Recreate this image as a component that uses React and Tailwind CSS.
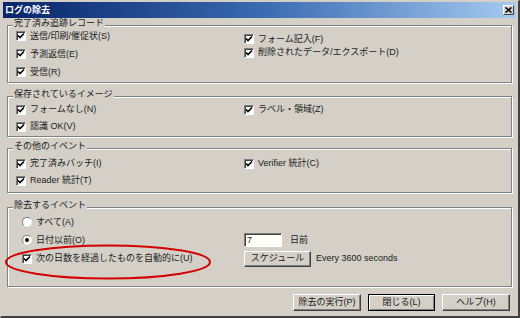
import React from "react";

const FONT = { fontFamily: '"Liberation Sans", "Noto Sans CJK JP", sans-serif' };

function Check({ checked = true }) {
  return (
    <span className="inline-flex w-[10px] h-[10px] shrink-0 items-center justify-center bg-white border border-t-[#808080] border-l-[#808080] border-b-white border-r-white shadow-[inset_1px_1px_0_#404040]">
      {checked && (
        <svg width="8" height="8" viewBox="0 0 8 8">
          <path d="M1 3.5 L3 5.5 L7 1.5" stroke="#000" strokeWidth="1.6" fill="none" />
        </svg>
      )}
    </span>
  );
}

function Radio({ checked }) {
  return (
    <span className="relative inline-flex w-[10px] h-[10px] shrink-0 items-center justify-center rounded-full bg-white border border-t-[#808080] border-l-[#808080] border-b-[#f0f0f0] border-r-[#f0f0f0]">
      {checked && <span className="w-[4px] h-[4px] rounded-full bg-black" />}
    </span>
  );
}

function CheckItem({ label, className = "" }) {
  return (
    <div className={"flex items-center gap-[4px] " + className}>
      <Check />
      <span className="leading-none whitespace-nowrap">{label}</span>
    </div>
  );
}

function Group({ title, className = "", children }) {
  return (
    <div
      className={
        "relative border border-[#808080] shadow-[inset_1px_1px_0_#ffffff,1px_1px_0_#ffffff] " +
        className
      }
    >
      <span className="absolute -top-[7px] left-[5px] bg-[#d4d0c8] px-[1px] leading-none text-[9px] whitespace-nowrap">
        {title}
      </span>
      {children}
    </div>
  );
}

function Btn({ children, isDefault = false, className = "" }) {
  return (
    <div
      className={
        "flex items-center justify-center bg-[#d4d0c8] leading-none whitespace-nowrap " +
        (isDefault
          ? "border border-black shadow-[inset_1px_1px_0_#ffffff,inset_-1px_-1px_0_#808080] "
          : "border border-t-white border-l-white border-b-[#404040] border-r-[#404040] shadow-[inset_-1px_-1px_0_#808080] ") +
        className
      }
    >
      {children}
    </div>
  );
}

export default function App() {
  return (
    <div
      className="relative w-[520px] h-[318px] bg-[#d4d0c8] text-[#1a1a1a] text-[9px] flex flex-col border-t border-l border-t-[#d4d0c8] border-l-[#d4d0c8] border-r-2 border-b-2 border-r-[#404040] border-b-[#404040] overflow-hidden"
      style={FONT}
    >
      {/* Title bar */}
      <div className="h-[16px] mx-[2px] mt-[1px] flex items-center justify-between bg-gradient-to-r from-[#0a246a] via-[#3a6ab0] to-[#a6caf0] pl-[2px] pr-[2px]">
        <span className="text-white font-bold leading-none text-[9px]">ログの除去</span>
        <div className="w-[11px] h-[10px] flex items-center justify-center bg-[#d4d0c8] border border-t-white border-l-white border-b-[#404040] border-r-[#404040]">
          <svg width="7" height="6" viewBox="0 0 7 6">
            <path d="M0.5 0.5 L6.5 5.5 M6.5 0.5 L0.5 5.5" stroke="#000" strokeWidth="1.5" />
          </svg>
        </div>
      </div>

      <div className="flex flex-col pl-[6px] pr-[6px]">
        {/* Group 1 */}
        <Group title="完了済み追跡レコード" className="mt-[7px] h-[58px] grid grid-cols-[236px_1fr]">
          <div className="flex flex-col pl-[8px] pt-[1px]">
            <CheckItem label="送信/印刷/催促状(S)" className="h-[18px]" />
            <CheckItem label="予測返信(E)" className="h-[18px]" />
            <CheckItem label="受信(R)" className="h-[18px]" />
          </div>
          <div className="flex flex-col pt-[6px]">
            <CheckItem label="フォーム記入(F)" className="h-[14px]" />
            <CheckItem label="削除されたデータ/エクスポート(D)" className="h-[13px]" />
          </div>
        </Group>

        {/* Group 2 */}
        <Group title="保存されているイメージ" className="mt-[13px] h-[41px] grid grid-cols-[236px_1fr]">
          <div className="flex flex-col pl-[8px] pt-[4px]">
            <CheckItem label="フォームなし(N)" className="h-[17px]" />
            <CheckItem label="認識 OK(V)" className="h-[17px]" />
          </div>
          <div className="flex flex-col pt-[4px]">
            <CheckItem label="ラベル・領域(Z)" className="h-[17px]" />
          </div>
        </Group>

        {/* Group 3 */}
        <Group title="その他のイベント" className="mt-[11px] h-[45px] grid grid-cols-[236px_1fr]">
          <div className="flex flex-col pl-[8px] pt-[6px]">
            <CheckItem label="完了済みバッチ(I)" className="h-[17px]" />
            <CheckItem label="Reader 統計(T)" className="h-[17px]" />
          </div>
          <div className="flex flex-col pt-[6px]">
            <CheckItem label="Verifier 統計(C)" className="h-[17px]" />
          </div>
        </Group>

        {/* Group 4 */}
        <Group title="除去するイベント" className="mt-[14px] h-[80px] pt-[5px] grid grid-cols-[236px_1fr] grid-rows-[18px_18px_19px] content-start">
          <div className="flex items-center gap-[4px] pl-[14px]">
            <Radio />
            <span className="leading-none">すべて(A)</span>
          </div>
          <div />
          <div className="flex items-center gap-[4px] pl-[14px]">
            <Radio checked />
            <span className="leading-none">日付以前(O)</span>
          </div>
          <div className="flex items-center gap-[8px]">
            <div className="w-[38px] h-[14px] bg-[#fffff8] border border-t-[#808080] border-l-[#808080] border-b-white border-r-white shadow-[inset_1px_1px_0_#404040] flex items-center pl-[2px] leading-none">
              7
            </div>
            <span className="leading-none">日前</span>
          </div>
          <div className="flex items-center gap-[4px] pl-[14px]">
            <Check />
            <span className="leading-none whitespace-nowrap">次の日数を経過したものを自動的に(U)</span>
          </div>
          <div className="flex items-center gap-[5px]">
            <Btn className="w-[67px] h-[16px]">スケジュール</Btn>
            <span className="leading-none whitespace-nowrap">Every 3600 seconds</span>
          </div>
        </Group>

        {/* Bottom buttons */}
        <div className="mt-[7px] flex justify-end gap-[7px] pr-[2px]">
          <Btn className="w-[68px] h-[17px]">除去の実行(P)</Btn>
          <Btn isDefault className="w-[67px] h-[17px]">閉じる(L)</Btn>
          <Btn className="w-[68px] h-[17px]">ヘルプ(H)</Btn>
        </div>
      </div>

      {/* Red annotation ellipse */}
      <svg className="absolute left-0 top-[242px] pointer-events-none" width="220" height="40" viewBox="0 0 220 40">
        <ellipse cx="107" cy="19" rx="102" ry="16.5" fill="none" stroke="#d40000" strokeWidth="2" />
      </svg>
    </div>
  );
}
